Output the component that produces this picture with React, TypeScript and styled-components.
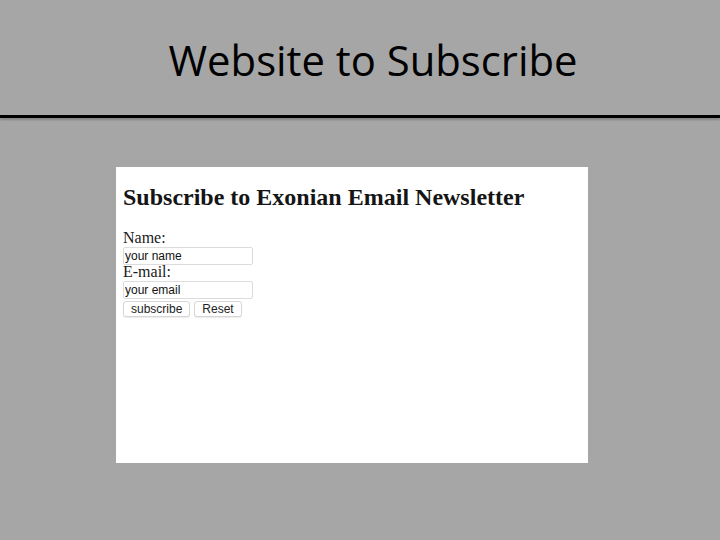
import React from 'react';
import styled, { createGlobalStyle } from 'styled-components';

const GlobalStyle = createGlobalStyle`
  html, body {
    margin: 0;
    padding: 0;
    background: #a6a6a6;
  }
`;

const Slide = styled.div`
  width: 720px;
  height: 540px;
  background: #a6a6a6;
  display: flex;
  flex-direction: column;
`;

const Header = styled.header`
  width: 100%;
  height: 118px;
  padding-top: 39px;
  display: flex;
  justify-content: center;
  border-bottom: 3px solid #000;
  box-shadow: 0 2px 2px rgba(0, 0, 0, 0.2);
  box-sizing: border-box;
`;

const Title = styled.h1`
  margin: 0 0 0 26px;
  font-family: 'Open Sans', 'Noto Sans', sans-serif;
  font-weight: 400;
  font-size: 41.8px;
  line-height: 42px;
  color: #000;
`;

const Screenshot = styled.div`
  margin: 49px 0 0 116px;
  width: 472px;
  height: 296px;
  background: #fff;
  box-sizing: border-box;
  padding: 16px 7px;
  font-family: 'Liberation Serif', serif;
  color: #111;
`;

const Heading = styled.h2`
  margin: 0 0 20px;
  font-size: 24px;
  font-weight: 700;
  line-height: 28px;
  color: #151515;
`;

const Form = styled.form`
  display: flex;
  flex-direction: column;
  align-items: flex-start;
`;

const Label = styled.label`
  font-size: 16px;
  line-height: 14px;
  margin-bottom: 2px;
  color: #1a1a1a;
`;

const Field = styled.input`
  width: 130px;
  height: 18px;
  box-sizing: border-box;
  border: 1px solid #dcdcdc;
  border-radius: 2px;
  padding: 0 1px;
  font-family: 'Liberation Sans', Arial, sans-serif;
  font-size: 12px;
  color: #111;
  margin: 0;
  outline: none;

  &::placeholder {
    color: #111;
  }
`;

const Buttons = styled.div`
  display: flex;
  gap: 4px;
  margin-top: 2px;
`;

const Button = styled.button`
  height: 16px;
  padding: 0 7px;
  box-sizing: border-box;
  border: 1px solid #d6d6d6;
  border-radius: 3px;
  background: #fff;
  box-shadow: 0 1px 1px rgba(0, 0, 0, 0.08);
  font-family: 'Liberation Sans', Arial, sans-serif;
  font-size: 12px;
  line-height: 14px;
  color: #222;
`;

export default function App() {
  return (
    <>
      <GlobalStyle />
      <Slide>
        <Header>
          <Title>{'Website to Subscribe'}</Title>
        </Header>
        <Screenshot>
          <Heading>{'Subscribe to Exonian Email Newsletter'}</Heading>
          <Form>
            <Label>{'Name:'}</Label>
            <Field placeholder={'your name'} />
            <Label>{'E-mail:'}</Label>
            <Field placeholder={'your email'} />
            <Buttons>
              <Button type={'button'}>{'subscribe'}</Button>
              <Button type={'reset'}>{'Reset'}</Button>
            </Buttons>
          </Form>
        </Screenshot>
      </Slide>
    </>
  );
}
